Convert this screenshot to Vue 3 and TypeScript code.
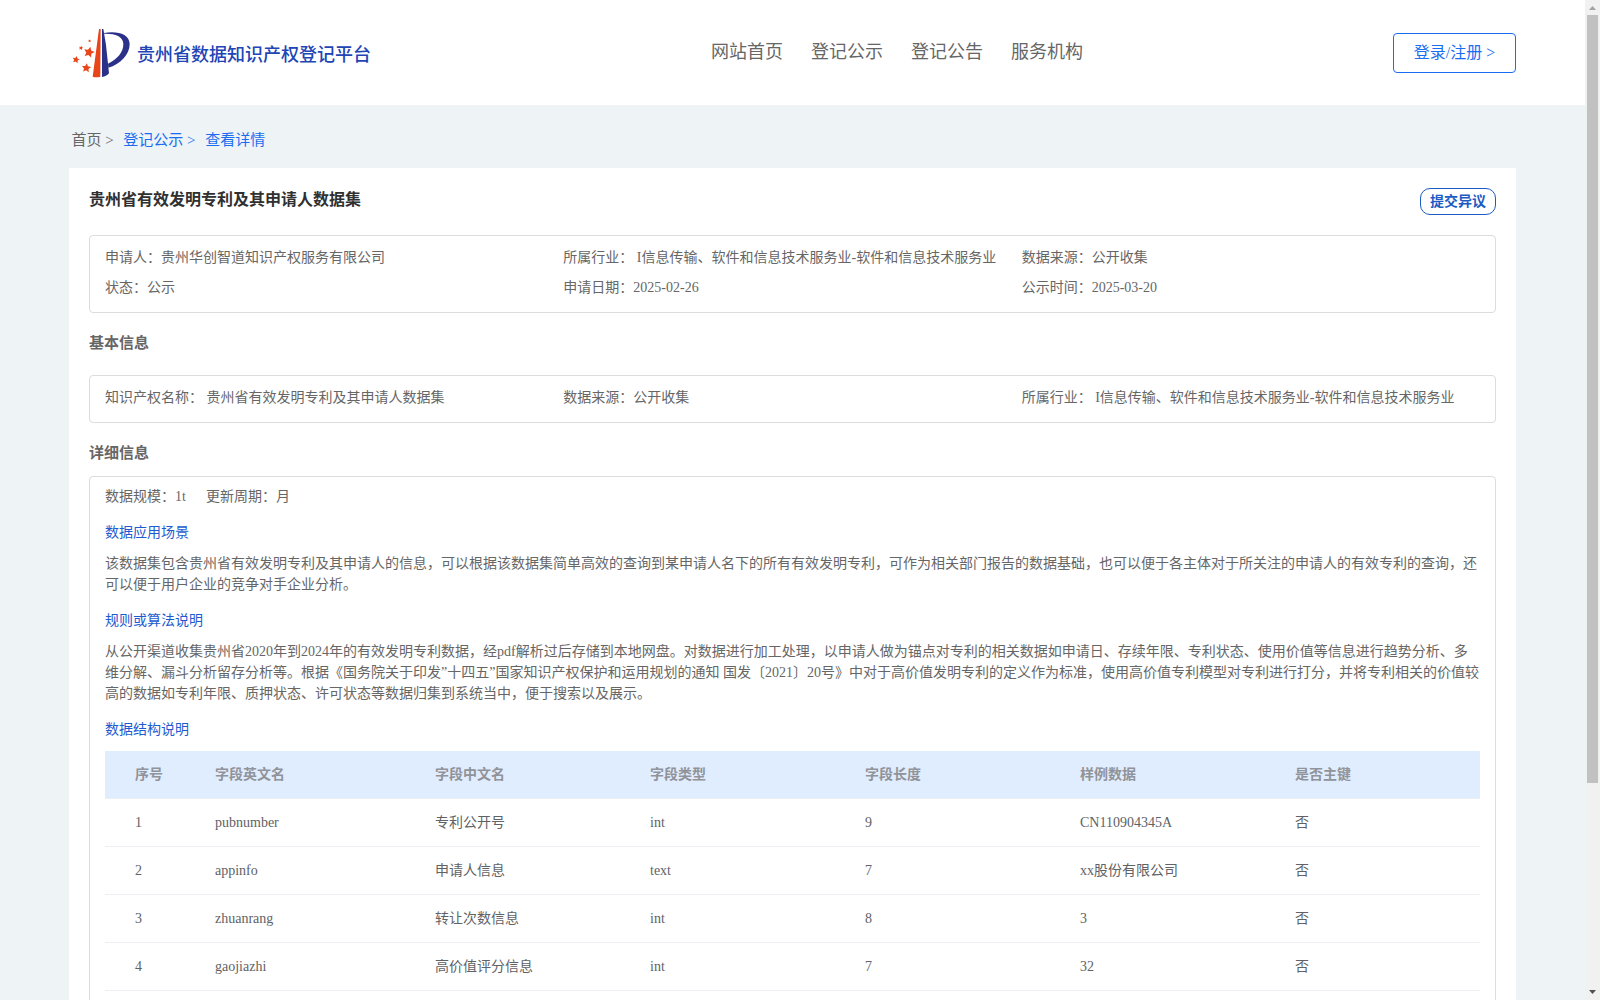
<script setup lang="ts">
interface Field {
  label: string
  value: string
}

interface Column {
  title: string
  width: number
}

const navItems: string[] = ['网站首页', '登记公示', '登记公告', '服务机构']

const summary: Field[] = [
  { label: '申请人：', value: '贵州华创智道知识产权服务有限公司' },
  { label: '所属行业：', value: ' I信息传输、软件和信息技术服务业-软件和信息技术服务业' },
  { label: '数据来源：', value: '公开收集' },
  { label: '状态：', value: '公示' },
  { label: '申请日期：', value: '2025-02-26' },
  { label: '公示时间：', value: '2025-03-20' },
]

const basics: Field[] = [
  { label: '知识产权名称：', value: ' 贵州省有效发明专利及其申请人数据集' },
  { label: '数据来源：', value: '公开收集' },
  { label: '所属行业：', value: ' I信息传输、软件和信息技术服务业-软件和信息技术服务业' },
]

const columns: Column[] = [
  { title: '序号', width: 100 },
  { title: '字段英文名', width: 220 },
  { title: '字段中文名', width: 215 },
  { title: '字段类型', width: 215 },
  { title: '字段长度', width: 215 },
  { title: '样例数据', width: 215 },
  { title: '是否主键', width: 195 },
]

const rows: string[][] = [
  ['1', 'pubnumber', '专利公开号', 'int', '9', 'CN110904345A', '否'],
  ['2', 'appinfo', '申请人信息', 'text', '7', 'xx股份有限公司', '否'],
  ['3', 'zhuanrang', '转让次数信息', 'int', '8', '3', '否'],
  ['4', 'gaojiazhi', '高价值评分信息', 'int', '7', '32', '否'],
]

function star(cx: number, cy: number, r: number, turn: number): string {
  const points: string[] = []
  for (let i = 0; i < 10; i++) {
    const radius = i % 2 === 0 ? r : r * 0.48
    const angle = ((i * 36 - 90 + turn) * Math.PI) / 180
    points.push(`${(cx + radius * Math.cos(angle)).toFixed(1)},${(cy + radius * Math.sin(angle)).toFixed(1)}`)
  }
  return points.join(' ')
}

const stars: string[] = [
  star(87, 127, 17, 14),
  star(48, 149, 11.5, 12),
  star(79, 174, 14.5, 6),
  star(63, 114, 7, 15),
  star(89, 93, 5, 10),
]
</script>

<template>
  <div class="window">
    <div class="page">
      <header class="header">
        <div class="brand">
          <svg class="logo" viewBox="33 51 180 156" width="60" height="52">
            <polygon v-for="points in stars" :key="points" :points="points" fill="#e8461a" />
            <path d="M117 57h5l-1 143q-12 4-23 0z" fill="#e8461a" />
            <path d="M126 57h4l8 48 9 85q-8 10-21 11z" fill="#2b3188" />
            <path d="M132 69C170 62 209 71 209 102C209 134 181 163 145 173L144 161C170 148 191 127 190 101C189 78 164 70 132 71z" fill="#2b3188" />
          </svg>
          <span class="brand-name">贵州省数据知识产权登记平台</span>
        </div>
        <nav class="nav">
          <a v-for="item in navItems" :key="item">{{ item }}</a>
        </nav>
        <button class="login">登录/注册 &gt;</button>
      </header>

      <div class="breadcrumb">
        <span>首页 &gt;</span>
        <a>登记公示 &gt;</a>
        <a>查看详情</a>
      </div>

      <main class="card">
        <div class="card-head">
          <h1>贵州省有效发明专利及其申请人数据集</h1>
          <button class="objection">提交异议</button>
        </div>

        <section class="box grid">
          <div v-for="field in summary" :key="field.label" class="field">{{ field.label }}{{ field.value }}</div>
        </section>

        <h2>基本信息</h2>
        <section class="box grid">
          <div v-for="field in basics" :key="field.label" class="field">{{ field.label }}{{ field.value }}</div>
        </section>

        <h2 class="compact">详细信息</h2>
        <section class="box detail">
          <div class="scale"><span>数据规模：1t</span><span>更新周期：月</span></div>
          <h3>数据应用场景</h3>
          <p>该数据集包含贵州省有效发明专利及其申请人的信息，可以根据该数据集简单高效的查询到某申请人名下的所有有效发明专利，可作为相关部门报告的数据基础，也可以便于各主体对于所关注的申请人的有效专利的查询，还可以便于用户企业的竞争对手企业分析。</p>
          <h3>规则或算法说明</h3>
          <p>从公开渠道收集贵州省2020年到2024年的有效发明专利数据，经pdf解析过后存储到本地网盘。对数据进行加工处理，以申请人做为锚点对专利的相关数据如申请日、存续年限、专利状态、使用价值等信息进行趋势分析、多维分解、漏斗分析留存分析等。根据《国务院关于印发”十四五”国家知识产权保护和运用规划的通知 国发〔2021〕20号》中对于高价值发明专利的定义作为标准，使用高价值专利模型对专利进行打分，并将专利相关的价值较高的数据如专利年限、质押状态、许可状态等数据归集到系统当中，便于搜索以及展示。</p>
          <h3>数据结构说明</h3>
          <table>
            <colgroup>
              <col v-for="column in columns" :key="column.title" :style="{ width: column.width + 'px' }" />
            </colgroup>
            <thead>
              <tr>
                <th v-for="column in columns" :key="column.title">{{ column.title }}</th>
              </tr>
            </thead>
            <tbody>
              <tr v-for="row in rows" :key="row[0]">
                <td v-for="(cell, index) in row" :key="index">{{ cell }}</td>
              </tr>
            </tbody>
          </table>
        </section>
      </main>
    </div>

    <div class="scrollbar">
      <svg width="15" height="15" viewBox="0 0 15 15"><path d="M4 10h7L7.5 6z" fill="#a3a3a3" /></svg>
      <div class="thumb"></div>
      <svg class="down" width="15" height="15" viewBox="0 0 15 15"><path d="M4 5h7L7.5 9z" fill="#505050" /></svg>
    </div>
  </div>
</template>

<style>
body {
  margin: 0;
  overflow: hidden;
}
</style>

<style scoped>
.window {
  display: flex;
  width: 1600px;
  height: 1000px;
  overflow: hidden;
  font-family: "Liberation Serif", "Noto Sans CJK SC", serif;
  font-size: 14px;
  color: #666;
  text-spacing-trim: space-all;
}

.page {
  width: 1585px;
  height: 1000px;
  overflow: hidden;
  background: #eef3f6;
}

.header {
  display: flex;
  align-items: flex-start;
  height: 105px;
  padding: 0 69px 0 71px;
  box-sizing: border-box;
  background: #fff;
}

.brand {
  display: flex;
  width: 640px;
  padding-top: 27px;
}

.brand-name {
  margin-left: 6px;
  font-size: 18px;
  line-height: 56px;
  font-weight: 500;
  color: #2145b5;
}

.nav {
  display: flex;
  flex: 1;
  gap: 28px;
  font-size: 18px;
  line-height: 30px;
  padding-top: 37px;
}

.login {
  width: 123px;
  height: 40px;
  margin-top: 33px;
  padding: 0;
  border: 1px solid #1a6df0;
  border-radius: 4px;
  background: #fff;
  color: #1a6df0;
  font: inherit;
  font-size: 16px;
  line-height: 38px;
}

.breadcrumb {
  display: flex;
  gap: 9.6px;
  height: 63px;
  padding-left: 71.5px;
  box-sizing: border-box;
  font-size: 15px;
  line-height: 71px;
}

.breadcrumb a {
  color: #1a6df0;
}

.card {
  width: 1447px;
  margin-left: 69px;
  padding: 0 20px;
  box-sizing: border-box;
  background: #fff;
}

.card-head {
  display: flex;
  justify-content: space-between;
  height: 67px;
  padding-top: 20px;
  box-sizing: border-box;
}

h1,
h2,
h3,
p {
  margin: 0;
}

h1 {
  font-size: 16px;
  line-height: 24px;
  color: #303030;
}

.objection {
  width: 76px;
  height: 27px;
  padding: 0;
  border: 1px solid #1c5bc4;
  border-radius: 10px;
  background: #fff;
  color: #1c5bc4;
  font: inherit;
  font-weight: bold;
  line-height: 25px;
}

.box {
  padding: 7px 15px 9px;
  border: 1px solid #dcdcdc;
  border-radius: 4px;
}

.grid {
  display: grid;
  grid-template-columns: repeat(3, 1fr);
}

.field {
  line-height: 30px;
  white-space: pre;
}

h2 {
  height: 62px;
  font-size: 15px;
  line-height: 61px;
}

h2.compact {
  height: 53px;
}

.detail {
  padding-top: 9px;
  padding-bottom: 40px;
}

.scale {
  display: flex;
  gap: 20px;
  line-height: 21px;
}

h3 {
  margin: 15px 0 10px;
  font-size: 14px;
  font-weight: normal;
  line-height: 21px;
  color: #1c5bd0;
}

p {
  line-height: 21px;
}

table {
  width: 1375px;
  margin-top: 11px;
  table-layout: fixed;
  border-collapse: separate;
  border-spacing: 0;
  color: #606266;
}

th,
td {
  height: 47px;
  padding: 0 0 0 10px;
  border-bottom: 1px solid #ebeef5;
  text-align: left;
  line-height: 23px;
}

th {
  background: #e0edff;
  color: #909399;
}

th:first-child,
td:first-child {
  padding-left: 30px;
}

.scrollbar {
  display: flex;
  flex-direction: column;
  width: 15px;
  height: 1000px;
  background: #f1f1f1;
}

.thumb {
  width: 11px;
  height: 768px;
  margin-left: 2px;
  background: #c1c1c1;
}

.down {
  margin-top: auto;
}
</style>
